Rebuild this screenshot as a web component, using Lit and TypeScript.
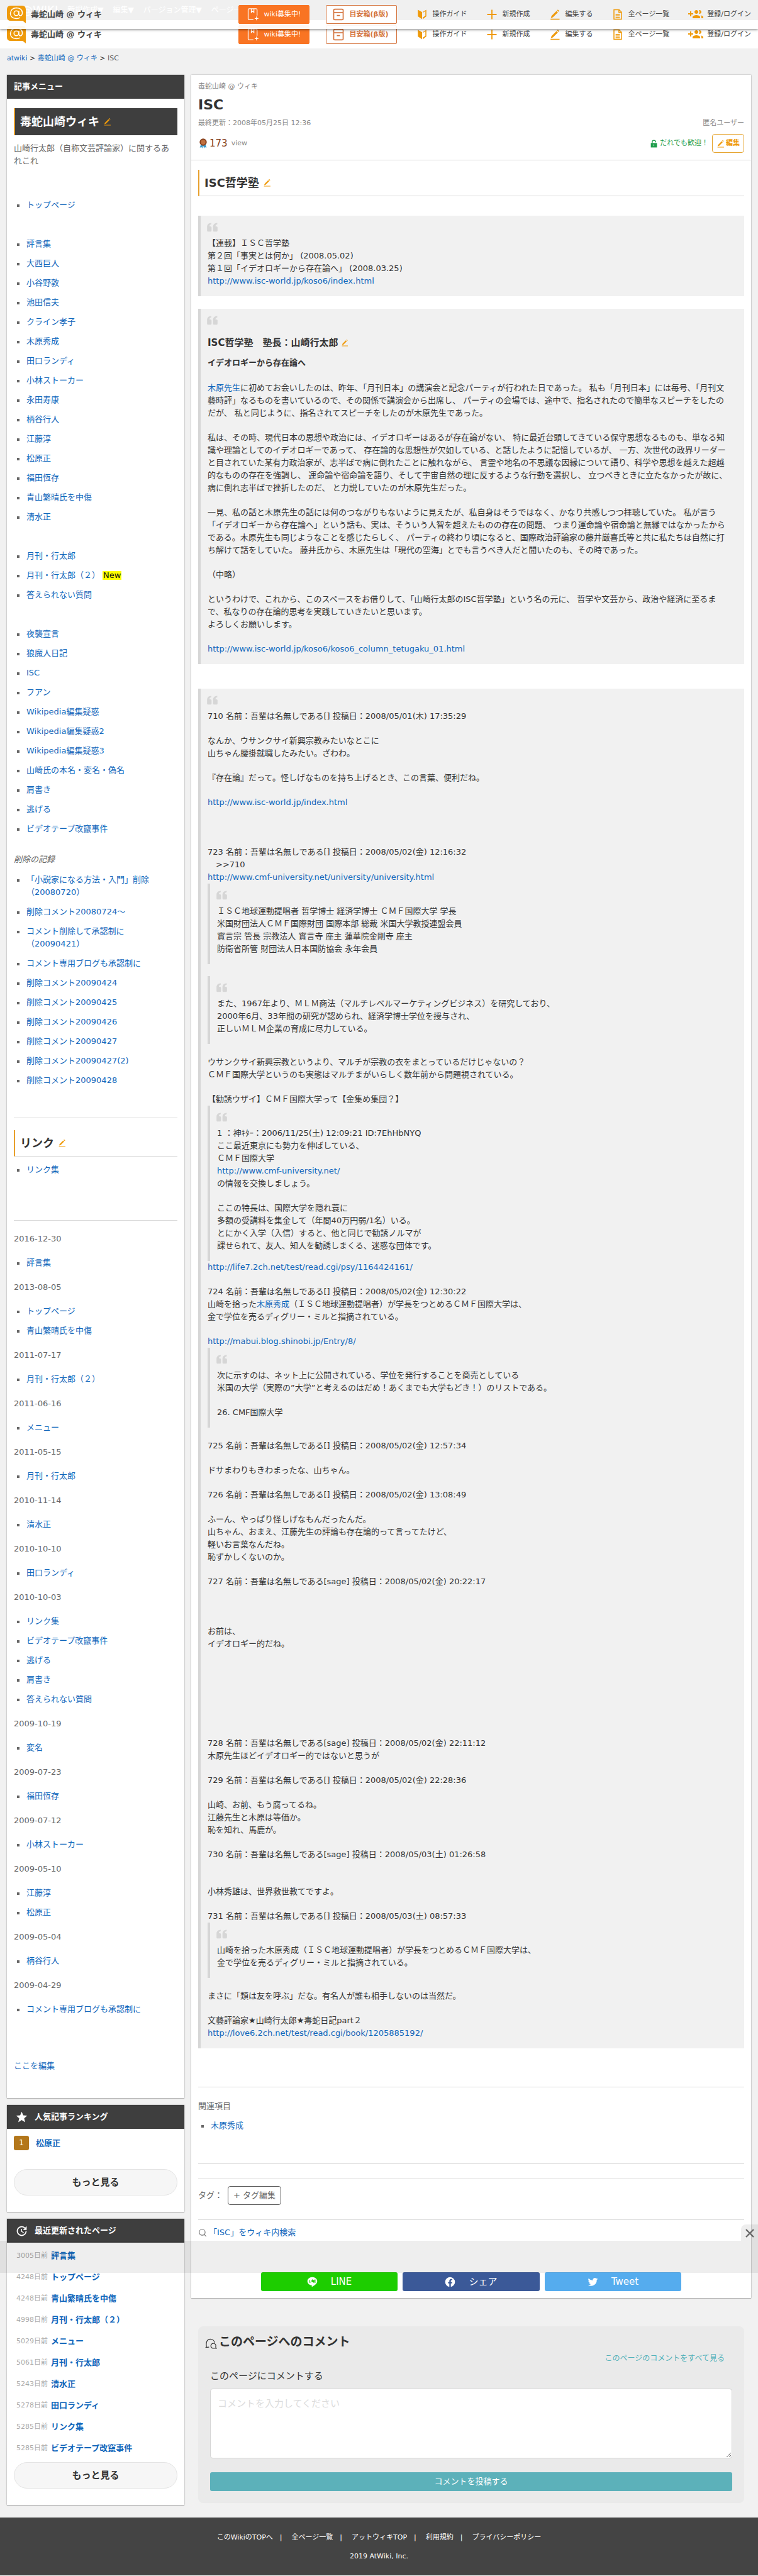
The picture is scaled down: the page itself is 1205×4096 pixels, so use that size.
import { LitElement, html, css, svg, nothing, type TemplateResult, type SVGTemplateResult } from "lit";
import { customElement, property } from "lit/decorators.js";

const PATHS: Record<string, SVGTemplateResult> = {
  pencil: svg`<path fill="currentColor" d="M15.500 4.500l3 3L8 18l-4.500 1.500L5 15zM16.800 3.200l1.700-1.700 3 3-1.700 1.700zM3 21h19v2H3z"/>`,
  beginner: svg`<path fill="currentColor" d="M3 2l9 5v15l-9-6zM21 2l-7.500 4.500v1.800l5.500-3.300v9.800l-5.500 3.600V22l7.500-6z"/>`,
  plus: svg`<path fill="currentColor" d="M10.800 2h2.400v8.800H22v2.400h-8.800V22h-2.400v-8.800H2v-2.400h8.800z"/>`,
  page: svg`<path fill="none" stroke="currentColor" stroke-width="2" d="M4 2h11l5 5v15H4zM14.500 2v5.500H20M7.500 11.500h9M7.500 15h9M7.500 18.500h9"/>`,
  users: svg`<path fill="currentColor" d="M8 10H5V7H3v3H0v2h3v3h2v-3h3v-2zm10 1c1.660 0 3-1.340 3-3s-1.340-3-3-3c-.320 0-.630.050-.910.140.570.810.900 1.790.900 2.860s-.340 2.040-.900 2.860c.280.090.590.140.910.140zm-5 0c1.660 0 3-1.340 3-3s-1.340-3-3-3-3 1.340-3 3 1.340 3 3 3zm6.620 2.160c.830.730 1.380 1.660 1.380 2.840v2h3v-2c0-1.540-2.370-2.490-4.380-2.840zM13 13c-2 0-6 1-6 3v2h12v-2c0-2-4-3-6-3z"/>`,
  book: svg`<path fill="none" stroke="currentColor" stroke-width="1.500" d="M13 22H5a2 2 0 0 1-2-2V3a2 2 0 0 1 2-2h13a2 2 0 0 1 2 2v11M9 1v7l2.500-2L14 8V1M19 16v7M15.500 19.500h7"/>`,
  box: svg`<path fill="none" stroke="currentColor" stroke-width="2" d="M5 2h14a2 2 0 0 1 2 2v16a2 2 0 0 1-2 2H5a2 2 0 0 1-2-2V4a2 2 0 0 1 2-2zM3 8.500h18M9 14h6"/>`,
  star: svg`<path fill="currentColor" d="M12 17.270L18.180 21l-1.640-7.030L22 9.240l-7.190-.610L12 2 9.190 8.630 2 9.240l5.460 4.730L5.820 21z"/>`,
  update: svg`<path fill="currentColor" d="M21 10.120h-6.780l2.740-2.820c-2.730-2.700-7.150-2.800-9.880-.100-2.730 2.710-2.730 7.080 0 9.790s7.150 2.710 9.880 0C18.320 15.650 19 14.080 19 12.100h2c0 1.980-.880 4.550-2.640 6.290-3.510 3.480-9.210 3.480-12.720 0-3.500-3.470-3.530-9.110-.020-12.580s9.140-3.470 12.650 0L21 3v7.120zM12.500 8v4.250l3.500 2.080-.720 1.210L11 13V8h1.500z"/>`,
  lock: svg`<path fill="none" stroke="currentColor" stroke-width="2.500" d="M7 11V7a5 5 0 0 1 10 0v1"/><path fill="currentColor" d="M3 10h18v13H3z"/><path stroke="#fff" stroke-width="2" d="M12 14v5"/>`,
  medal: svg`<path fill="#3a9bd0" d="M7 13l-3 9 4-1 2 3 2-7 2 7 2-3 4 1-3-9z"/><circle cx="12" cy="9" r="8.500" fill="#8a4420"/><circle cx="12" cy="9" r="5.500" fill="#c0703f"/>`,
  search: svg`<circle cx="11" cy="11" r="8" fill="none" stroke="currentColor" stroke-width="2"/><path stroke="currentColor" stroke-width="2" d="M16.500 17l5.500 5.500"/>`,
  quote: svg`<path fill="currentColor" d="M10 3v3c-2.500.4-3.600 1.600-3.700 4H8.500a2 2 0 0 1 2 2v6.500a2 2 0 0 1-2 2h-5a2 2 0 0 1-2-2V11C1.500 6 4.500 3.400 10 3zM22 3v3c-2.500.4-3.600 1.600-3.700 4h2.200a2 2 0 0 1 2 2v6.500a2 2 0 0 1-2 2h-5a2 2 0 0 1-2-2V11c0-5 3-7.600 8.500-8z"/>`,
  chat: svg`<path fill="none" stroke="currentColor" stroke-width="1.500" d="M8 19c-1.500 0-3 .5-6 .5 1.500-1.500 1-3 .5-4.500C1.500 8 5 3 10.500 3c4.500 0 8 3 8.500 7"/><path fill="none" stroke="currentColor" stroke-width="1.500" d="M22.500 21.500h-6a5 5 0 1 1 4.800-3.200c0 1.200.2 2.200 1.200 3.200z"/>`,
  line: svg`<path fill="currentColor" d="M12 1C5.500 1 1 5.200 1 10.300c0 4.500 3.800 8.300 9.200 9.100 1.300.3.500 2 .5 3.600C15 21 23 16.500 23 10.300 23 5.200 18.500 1 12 1z"/><path fill="none" stroke="#1dcd00" stroke-width="1.500" d="M5.500 7.500v5h2.500M9.800 7.500v5M12 12.500v-5l3 5v-5M19.500 7.500H17v5h2.500M17 10h2.500"/>`,
  facebook: svg`<path fill="currentColor" d="M23 12a11 11 0 1 0-12.700 10.900v-7.700H7.500V12h2.800V9.600c0-2.800 1.600-4.300 4.100-4.300 1.200 0 2.500.2 2.500.2v2.700h-1.400c-1.400 0-1.800.9-1.800 1.700V12h3.100l-.5 3.200h-2.600v7.700A11 11 0 0 0 23 12z"/>`,
  twitter: svg`<path fill="currentColor" d="M23 5.100a9 9 0 0 1-2.600.7 4.500 4.500 0 0 0 2-2.500 9 9 0 0 1-2.900 1.100 4.500 4.500 0 0 0-7.700 4.100A12.800 12.800 0 0 1 2.500 3.800a4.500 4.500 0 0 0 1.400 6 4.500 4.500 0 0 1-2-.6c0 2.200 1.500 4.100 3.600 4.500a4.500 4.500 0 0 1-2 .1 4.500 4.500 0 0 0 4.200 3.100A9 9 0 0 1 1 18.800a12.800 12.800 0 0 0 19.700-11.400A9 9 0 0 0 23 5.100z"/>`,
  close: svg`<path fill="none" stroke="currentColor" stroke-width="3.500" d="M3 3l18 18M21 3L3 21"/>`,
};

@customElement("wiki-icon")
class WikiIcon extends LitElement {
  @property() name = "";
  static styles = css`
    :host { display: inline-block; flex: none; width: 16px; height: 16px; }
    svg { display: block; width: 100%; height: 100%; }
  `;
  render() {
    return html`<svg viewBox="0 0 24 24" aria-hidden="true">${PATHS[this.name]}</svg>`;
  }
}

const MENU_GROUPS: string[][] = [
  ["トップページ"],
  ["評言集", "大西巨人", "小谷野敦", "池田信夫", "クライン孝子", "木原秀成", "田口ランディ", "小林ストーカー",
    "永田寿康", "柄谷行人", "江藤淳", "松原正", "福田恆存", "青山繁晴氏を中傷", "清水正"],
  ["月刊・行太郎", "月刊・行太郎（２）", "答えられない質問"],
  ["夜襲宣言", "狼魔人日記", "ISC", "フアン", "Wikipedia編集疑惑", "Wikipedia編集疑惑2", "Wikipedia編集疑惑3",
    "山崎氏の本名・変名・偽名", "肩書き", "逃げる", "ビデオテープ改竄事件"],
];
const FRESH = "月刊・行太郎（２）";

const DELETED = [
  "「小説家になる方法・入門」削除（20080720）", "削除コメント20080724～", "コメント削除して承認制に（20090421）",
  "コメント専用ブログも承認制に", "削除コメント20090424", "削除コメント20090425", "削除コメント20090426",
  "削除コメント20090427", "削除コメント20090427(2)", "削除コメント20090428",
];

const HISTORY: [string, string[]][] = [
  ["2016-12-30", ["評言集"]],
  ["2013-08-05", ["トップページ", "青山繁晴氏を中傷"]],
  ["2011-07-17", ["月刊・行太郎（２）"]],
  ["2011-06-16", ["メニュー"]],
  ["2011-05-15", ["月刊・行太郎"]],
  ["2010-11-14", ["清水正"]],
  ["2010-10-10", ["田口ランディ"]],
  ["2010-10-03", ["リンク集", "ビデオテープ改竄事件", "逃げる", "肩書き", "答えられない質問"]],
  ["2009-10-19", ["変名"]],
  ["2009-07-23", ["福田恆存"]],
  ["2009-07-12", ["小林ストーカー"]],
  ["2009-05-10", ["江藤淳", "松原正"]],
  ["2009-05-04", ["柄谷行人"]],
  ["2009-04-29", ["コメント専用ブログも承認制に"]],
];

const RECENT: [number, string][] = [
  [3005, "評言集"], [4248, "トップページ"], [4248, "青山繁晴氏を中傷"], [4998, "月刊・行太郎（２）"], [5029, "メニュー"],
  [5061, "月刊・行太郎"], [5243, "清水正"], [5278, "田口ランディ"], [5285, "リンク集"], [5285, "ビデオテープ改竄事件"],
];

const RIBBON = ["新規作成▼", "編集▼", "バージョン管理▼", "ページ一覧▼"];
const FOOTER = ["このWikiのTOPへ", "全ページ一覧", "アットウィキTOP", "利用規約", "プライバシーポリシー"];

const link = (text: string, cls = "") => html`<a class=${cls || nothing} href="#">${text}</a>`;
const lines = (...rows: (string | TemplateResult)[]) => rows.map((r, i) => (i ? html`<br>${r}` : r));
const para = (cls: string, ...rows: (string | TemplateResult)[]) => html`<p class=${cls || nothing}>${lines(...rows)}</p>`;
const head = (no: number, when: string, mail = "") => `${no} 名前：吾輩は名無しである[${mail}] 投稿日：${when}`;
const quote = (cls: string, body: TemplateResult) =>
  html`<blockquote class=${cls || nothing}><wiki-icon class="mark" name="quote"></wiki-icon>${body}</blockquote>`;
const items = (names: string[]) => html`<ul>${names.map(
  (n) => html`<li>${link(n)}</li>`)}</ul>`;

@customElement("app-root")
class AppRoot extends LitElement {
  static styles = css`
    :host {
      display: block; position: relative; background: #f1f1f1; color: #333;
      font: 13px/20px "DejaVu Sans", "Noto Sans CJK JP", sans-serif;
    }
    * { box-sizing: border-box; }
    a { color: #0f66bb; text-decoration: none; }
    p, h1, h2, h3, h4, ul, dl, dd, blockquote { margin: 0; padding: 0; }
    button, textarea { font: inherit; color: inherit; }
    hr { height: 1px; margin: 0; border: 0; background: #d8d8d8; }

    .ribbon { display: flex; align-items: center; gap: 15px; height: 32px; padding-left: 34px; background: #333; color: #fff; font-size: 12px; }
    .ribbon b { font-size: 18px; font-weight: normal; }
    .bar { display: flex; align-items: center; height: 45px; padding: 0 11px; background: #fff; font-size: 11px; }
    .bar a { color: #444; }
    .floating { position: absolute; z-index: 3; top: 0; left: 0; right: 0; height: 46px; background: rgba(255, 255, 255, .93); box-shadow: 0 1px 4px rgba(0, 0, 0, .5); }
    .brand { display: flex; align-items: center; gap: 8px; margin-right: auto; font-size: 13px; font-weight: bold; }
    .logo { flex: none; width: 30px; height: 28px; }
    .promo { display: flex; align-items: center; gap: 8px; width: 113px; height: 30px; margin-right: 26px; padding: 0 12px; border: 1px solid #f97423; border-radius: 2px; background: #f97423; }
    .bar .promo { color: #fff; }
    .promo wiki-icon { width: 20px; height: 22px; }
    .bar .promo.line { border-color: #d4733c; background: #fff; color: #d4733c; font-weight: bold; padding: 0 9px; }
    .tools { display: flex; gap: 30px; margin-left: 5px; }
    .tool { display: flex; align-items: center; gap: 8px; white-space: nowrap; }
    .tool wiki-icon { width: 18px; height: 18px; color: #ef9a0a; }
    .tool.wide { gap: 6px; }
    .tool.wide wiki-icon { width: 24px; height: 24px; }

    .crumbs { padding: 6px 11px 16px; font-size: 11px; }
    .crumbs span { color: #666; }
    .columns { display: grid; grid-template-columns: 282px minmax(0, 1fr); gap: 11px; padding: 0 11px 20px; align-items: start; }
    .side { display: grid; gap: 11px; }
    .card { background: #fff; box-shadow: 0 0 2px rgba(0, 0, 0, .35), 0 1px 1px rgba(0, 0, 0, .15); }

    .cap { display: flex; align-items: center; gap: 10px; height: 38px; padding: 0 11px; background: #3e3e3e; color: #fff; font-size: 13px; }
    .cap.icon { padding-left: 13px; }
    .cap wiki-icon { width: 21px; height: 21px; }
    .inner { padding: 0 11px; color: #666; }
    .title { display: flex; align-items: center; gap: 6px; height: 42px; padding-left: 8px; border-left: 2px solid #e8a02c; border-bottom: 1px solid #d8d8d8; color: #333; font-size: 18px; }
    .title.dark { height: 43px; margin-top: 15px; border-bottom: 0; background: #3e3e3e; color: #fff; }
    .pen { width: 13px; height: 13px; color: #ef9a0a; }
    .intro { margin: 11px 0 45px; padding-right: 6px; }
    ul { list-style: none; }
    li { display: flex; gap: 11px; padding: 5px 0 6px 5px; color: #666; }
    li::before { content: ""; flex: none; width: 4px; height: 4px; margin-top: 9px; background: #666; }
    .menu ul { margin-bottom: 31px; }
    .new { margin-left: -7px; padding: 0 1px; background: #ff0; color: #111; line-height: 14px; align-self: center; }
    .record { display: block; margin: -8px 0 7px; }
    .below { margin-top: 43px; margin-bottom: 19px; }
    .links { margin-top: 6px; }
    .history { margin-top: 64px; padding-top: 19px; border-top: 1px solid #d8d8d8; }
    .history dt + dd { margin: 13px 0; }
    .edit { display: block; margin: 64px 0 0; padding-bottom: 41px; }
    .history dd:last-child { margin-bottom: 0; }

    .rank { display: flex; align-items: center; gap: 11px; padding-top: 11px; margin-bottom: 30px; font-weight: bold; }
    .badge { width: 24px; height: 23px; border-radius: 3px; background: #b3771b; color: #fff; font-size: 12px; line-height: 23px; text-align: center; font-weight: normal; }
    .more { display: block; width: 100%; height: 42px; border: 1px solid #e4e4e4; border-radius: 21px; background: #f6f6f6; color: #333; font-size: 15px; font-weight: bold; }
    .pad { padding-bottom: 26px; }
    .recent { padding: 4px 0 5px; }
    .recent p { display: flex; align-items: center; gap: 5px; height: 34px; padding-left: 4px; font-weight: bold; }
    .recent span { color: #aaa; font-size: 11px; font-weight: normal; }

    .page { padding: 10px 11px 11px; }
    .meta { display: flex; justify-content: space-between; color: #888; font-size: 11px; line-height: 18px; }
    h1 { margin: 6px 0; font-size: 22px; line-height: 28px; color: #333; }
    .stats { display: flex; align-items: center; height: 30px; margin: 8px 0 11px; color: #888; font-size: 11px; }
    .stats b { margin: 0 6px 0 2px; color: #85401c; font-size: 15px; font-weight: normal; }
    .open { display: flex; align-items: center; gap: 3px; margin: 0 6px 0 auto; color: #1f9d4c; }
    .open wiki-icon { width: 13px; height: 15px; }
    .editbtn { display: flex; align-items: center; gap: 2px; height: 30px; padding: 0 6px; border: 1px solid #e6a531; border-radius: 4px; background: #fff; color: #ef9a0a; font-size: 11px; font-weight: bold; }
    .rule { margin: 0 -11px 15px; }

    blockquote { position: relative; padding: 34px 25px 14px 11px; border-left: 4px solid #d6d6d6; background: #f1f1f1; }
    .mark { position: absolute; left: 8px; top: 9px; width: 21px; height: 19px; color: #d6d6d6; }
    blockquote > * + * { margin-top: 19px; }
    blockquote > .mark + * { margin-top: 0; }
    blockquote > .tight { margin-top: 0; }
    blockquote > .gap2 { margin-top: 39px; }
    blockquote > .gap3 { margin-top: 59px; }
    blockquote > .gap7 { margin-top: 138px; }
    blockquote > h3.sub { display: flex; align-items: center; gap: 5px; margin-top: 8px; font-size: 15px; line-height: 24px; }
    .sub .pen { width: 12px; height: 12px; }
    blockquote > h4 { margin-top: 10px; font-size: 13px; }
    blockquote > h4 + p { margin-top: 20px; }
    .q1 { margin-top: 31px; }
    .q2 { margin-top: 20px; }
    .q3 { margin: 39px 0 61px; }

    .related { margin-top: 20px; color: #666; }
    .related ul { margin: 6px 0 44px; }
    .tags { display: flex; align-items: center; gap: 8px; margin: 23px 0; padding-top: 11px; border-top: 1px solid #d8d8d8; color: #666; }
    .tagbtn { height: 30px; padding: 0 8px; border: 1px solid #555; border-radius: 4px; background: #fff; }
    .find { display: flex; align-items: center; gap: 3px; margin: 10px 0 53px; color: #777; }
    .find wiki-icon { width: 14px; height: 14px; }
    .share { display: grid; grid-template-columns: repeat(3, 1fr); gap: 8px; width: 77%; margin: 0 auto; }
    .share a { display: flex; align-items: center; justify-content: center; gap: 21px; height: 30px; border-radius: 3px; color: #fff; font-size: 15px; }
    .share wiki-icon { width: 17px; height: 17px; }
    .s-line { background: #1dcd00; }
    .s-fb { background: #3b5998; }
    .s-tw { background: #55acee; }

    .comments { margin: 45px 11px 0; padding: 10px 19px 19px; border-radius: 8px; background: #eaeaea; }
    .comments h2 { display: flex; align-items: center; gap: 3px; margin-left: -8px; font-size: 19px; line-height: 28px; }
    .comments h2 wiki-icon { width: 19px; height: 19px; margin-top: 6px; }
    .all { display: block; margin: 3px 12px 8px; text-align: right; color: #52b1b9; font-size: 12px; }
    .comments label { display: block; margin-bottom: 10px; font-size: 15px; }
    textarea { display: block; width: 100%; height: 111px; padding: 13px 11px; border: 1px solid #d4d4d4; border-radius: 4px; background: #fff; font-size: 15px; }
    textarea::placeholder { color: #dcdcdc; }
    .post { display: block; width: 100%; height: 30px; margin-top: 22px; border: 0; border-radius: 3px; background: #5cb1ba; color: #fff; }

    footer { padding: 21px 0 20px; background: #444; color: #fff; font-size: 11px; text-align: center; }
    footer nav { display: flex; justify-content: center; margin-bottom: 10px; line-height: 21px; }
    footer a { color: #fff; }
    footer nav span { margin: 0 15px 0 11px; }

    .banner { position: absolute; z-index: 2; top: 3563px; left: 0; right: 0; height: 51px; background: rgba(0, 0, 0, .065); }
    .close { position: absolute; right: 0; bottom: 100%; width: 27px; height: 26px; padding: 6px; border: 0; border-radius: 8px 0 0 0; background: rgba(0, 0, 0, .065); color: #666; }
    .close wiki-icon { display: block; width: 16px; height: 16px; }
  `;

  private bar(cls = "") {
    return html`<header class="bar ${cls}">
      <a class="brand" href="#">
        <svg class="logo" viewBox="0 0 30 28" aria-hidden="true">
          <path fill="#ef9a0a" d="M6 0h18q6 0 6 6v22l-5-4H6q-6 0-6-6V6q0-6 6-6z"/>
          <g fill="none" stroke="#fff" stroke-width="1.500"><circle cx="15" cy="12" r="3.800"/><path d="M19 8v5q0 3 2.500 3 3-.500 3-5-.500-7-9.500-7.500Q6 4 5.500 12.500 6 20 15 20.500q4 0 6-1.500"/></g>
        </svg>毒蛇山崎 @ ウィキ</a>
      <a class="promo" href="#"><wiki-icon name="book"></wiki-icon>wiki募集中!</a>
      <a class="promo line" href="#"><wiki-icon name="box"></wiki-icon>目安箱(β版)</a>
      <nav class="tools">
        <a class="tool" href="#"><wiki-icon name="beginner"></wiki-icon>操作ガイド</a>
        <a class="tool" href="#"><wiki-icon name="plus"></wiki-icon>新規作成</a>
        <a class="tool" href="#"><wiki-icon name="pencil"></wiki-icon>編集する</a>
        <a class="tool" href="#"><wiki-icon name="page"></wiki-icon>全ページ一覧</a>
        <a class="tool wide" href="#"><wiki-icon name="users"></wiki-icon>登録/ログイン</a>
      </nav>
    </header>`;
  }

  private side() {
    const pen = html`<wiki-icon class="pen" name="pencil"></wiki-icon>`;
    return html`<aside class="side">
      <section class="card">
        <h2 class="cap">記事メニュー</h2>
        <div class="inner">
          <h2 class="title dark">毒蛇山崎ウィキ${pen}</h2>
          <p class="intro">山崎行太郎（自称文芸評論家）に関するあれこれ</p>
          <div class="menu">${MENU_GROUPS.map((g) => html`<ul>${g.map(
            (n) => html`<li>${link(n)}${n === FRESH ? html`<span class="new">New</span>` : nothing}</li>`)}</ul>`)}</div>
          <em class="record">削除の記録</em>
          ${items(DELETED)}
          <hr class="below">
          <h2 class="title">リンク${pen}</h2>
          <div class="links">${items(["リンク集"])}</div>
          <dl class="history">${HISTORY.map(([day, names]) => html`<dt>${day}</dt><dd>${items(names)}</dd>`)}</dl>
          <a class="edit" href="#">ここを編集</a>
        </div>
      </section>
      <section class="card">
        <h2 class="cap icon"><wiki-icon name="star"></wiki-icon>人気記事ランキング</h2>
        <div class="inner pad">
          <div class="rank"><span class="badge">1</span>${link("松原正")}</div>
          <button class="more">もっと見る</button>
        </div>
      </section>
      <section class="card">
        <h2 class="cap icon"><wiki-icon name="update"></wiki-icon>最近更新されたページ</h2>
        <div class="inner pad">
          <div class="recent">${RECENT.map(([d, n]) => html`<p><span>${d}日前</span>${link(n)}</p>`)}</div>
          <button class="more">もっと見る</button>
        </div>
      </section>
    </aside>`;
  }

  private article() {
    return html`
      ${quote("q1", para("", "【連載】ＩＳＣ哲学塾", "第２回「事実とは何か」 (2008.05.02)", "第１回「イデオロギーから存在論へ」 (2008.03.25)",
        link("http://www.isc-world.jp/koso6/index.html")))}
      ${quote("q2", html`
        <h3 class="sub">ISC哲学塾　塾長：山崎行太郎<wiki-icon class="pen" name="pencil"></wiki-icon></h3>
        <h4>イデオロギーから存在論へ</h4>
        <p>${link("木原先生")}に初めてお会いしたのは、昨年、「月刊日本」の講演会と記念パーティが行われた日であった。 私も「月刊日本」には毎号、「月刊文藝時評」なるものを書いているので、その関係で講演会から出席し、 パーティの会場では、途中で、指名されたので簡単なスピーチをしたのだが、 私と同じように、指名されてスピーチをしたのが木原先生であった。</p>
        <p>私は、その時、現代日本の思想や政治には、イデオロギーはあるが存在論がない、 特に最近台頭してきている保守思想なるものも、単なる知識や理論としてのイデオロギーであって、 存在論的な思想性が欠如している、と話したように記憶しているが、 一方、次世代の政界リーダーと目されていた某有力政治家が、志半ばで病に倒れたことに触れながら、 言霊や地名の不思議な因縁について語り、科学や思想を越えた超越的なものの存在を強調し、 運命論や宿命論を語り、そして宇宙自然の理に反するような行動を選択し、 立つべきときに立たなかったが故に、病に倒れ志半ばで挫折したのだ、 と力説していたのが木原先生だった。</p>
        <p>一見、私の話と木原先生の話には何のつながりもないように見えたが、私自身はそうではなく、かなり共感しつつ拝聴していた。 私が言う「イデオロギーから存在論へ」という話も、実は、そういう人智を超えたものの存在の問題、 つまり運命論や宿命論と無縁ではなかったからである。木原先生も同じようなことを感じたらしく、 パーティの終わり頃になると、国際政治評論家の藤井厳喜氏等と共に私たちは自然に打ち解けて話をしていた。 藤井氏から、木原先生は「現代の空海」とでも言うべき人だと聞いたのも、その時であった。</p>
        <p>（中略）</p>
        <p>というわけで、これから、このスペースをお借りして、「山崎行太郎のISC哲学塾」という名の元に、 哲学や文芸から、政治や経済に至るまで、私なりの存在論的思考を実践していきたいと思います。<br>よろしくお願いします。</p>
        <p>${link("http://www.isc-world.jp/koso6/koso6_column_tetugaku_01.html")}</p>`)}
      ${quote("q3", html`
        ${para("", head(710, "2008/05/01(木) 17:35:29"))}
        ${para("", "なんか、ウサンクサイ新興宗教みたいなとこに", "山ちゃん腰掛就職したみたい。ざわわ。")}
        ${para("", "『存在論』だって。怪しげなものを持ち上げるとき、この言葉、便利だね。")}
        ${para("", link("http://www.isc-world.jp/index.html"))}
        ${para("gap3", head(723, "2008/05/02(金) 12:16:32"), "　>>710", link("http://www.cmf-university.net/university/university.html"))}
        ${quote("tight", para("", "ＩＳＣ地球運動提唱者 哲学博士 経済学博士 ＣＭＦ国際大学 学長", "米国財団法人ＣＭＦ国際財団 国際本部 総裁 米国大学教授連盟会員",
          "實言宗 管長 宗教法人 實言寺 座主 蓮華院金剛寺 座主", "防衛省所管 財団法人日本国防協会 永年会員"))}
        ${quote("", para("", "また、1967年より、ＭＬＭ商法（マルチレベルマーケティングビジネス）を研究しており、", "2000年6月、33年間の研究が認められ、経済学博士学位を授与され、",
          "正しいＭＬＭ企業の育成に尽力している。"))}
        ${para("", "ウサンクサイ新興宗教というより、マルチが宗教の衣をまとっているだけじゃないの？", "ＣＭＦ国際大学というのも実態はマルチまがいらしく数年前から問題視されている。")}
        ${para("", "【勧誘ウザイ】ＣＭＦ国際大学って【金集め集団？】")}
        ${quote("tight", html`
          ${para("", "1 ：神ｷﾀｰ：2006/11/25(土) 12:09:21 ID:7EhHbNYQ", "ここ最近東京にも勢力を伸ばしている、", "ＣＭＦ国際大学", link("http://www.cmf-university.net/"), "の情報を交換しましょう。")}
          ${para("", "ここの特長は、国際大学を隠れ蓑に", "多額の受講料を集金して（年間40万円弱/1名）いる。", "とにかく入学（入信）すると、他と同じで勧誘ノルマが", "課せられて、友人、知人を勧誘しまくる、迷惑な団体です。")}`)}
        ${para("tight", link("http://life7.2ch.net/test/read.cgi/psy/1164424161/"))}
        ${para("", head(724, "2008/05/02(金) 12:30:22"), html`山崎を拾った${link("木原秀成")}（ＩＳＣ地球運動提唱者）が学長をつとめるＣＭＦ国際大学は、`, "金で学位を売るディグリー・ミルと指摘されている。")}
        ${para("", link("http://mabui.blog.shinobi.jp/Entry/8/"))}
        ${quote("tight", html`
          ${para("", "次に示すのは、ネット上に公開されている、学位を発行することを商売としている", "米国の大学（実際の”大学”と考えるのはだめ！あくまでも大学もどき！）のリストである。")}
          ${para("", "26. CMF国際大学")}`)}
        ${para("", head(725, "2008/05/02(金) 12:57:34"))}
        ${para("", "ドサまわりもきわまったな、山ちゃん。")}
        ${para("", head(726, "2008/05/02(金) 13:08:49"))}
        ${para("", "ふーん、やっぱり怪しげなもんだったんだ。", "山ちゃん、おまえ、江藤先生の評論も存在論的って言ってたけど、", "軽いお言葉なんだね。", "恥ずかしくないのか。")}
        ${para("", head(727, "2008/05/02(金) 20:22:17", "sage"))}
        ${para("gap3", "お前は、", "イデオロギー的だね。")}
        ${para("gap7", head(728, "2008/05/02(金) 22:11:12", "sage"), "木原先生ほどイデオロギー的ではないと思うが")}
        ${para("", head(729, "2008/05/02(金) 22:28:36"))}
        ${para("", "山崎、お前、もう腐ってるね。", "江藤先生と木原は等価か。", "恥を知れ、馬鹿が。")}
        ${para("", head(730, "2008/05/03(土) 01:26:58", "sage"))}
        ${para("gap2", "小林秀雄は、世界救世教てですよ。")}
        ${para("", head(731, "2008/05/03(土) 08:57:33"))}
        ${quote("tight", para("", "山崎を拾った木原秀成（ＩＳＣ地球運動提唱者）が学長をつとめるＣＭＦ国際大学は、", "金で学位を売るディグリー・ミルと指摘されている。"))}
        ${para("", "まさに「類は友を呼ぶ」だな。有名人が誰も相手しないのは当然だ。")}
        ${para("", "文藝評論家★山崎行太郎★毒蛇日記part２", link("http://love6.2ch.net/test/read.cgi/book/1205885192/"))}`)}
    `;
  }

  render() {
    return html`
      <div class="ribbon"><b>@WIKI</b>${RIBBON.map((t) => html`<span>${t}</span>`)}</div>
      ${this.bar("floating")}
      ${this.bar()}
      <nav class="crumbs">${link("atwiki")} &gt; ${link("毒蛇山崎 @ ウィキ")} &gt; <span>ISC</span></nav>
      <div class="columns">
        ${this.side()}
        <main>
          <article class="card page">
            <div class="meta">毒蛇山崎 @ ウィキ</div>
            <h1>ISC</h1>
            <div class="meta"><span>最終更新：2008年05月25日 12:36</span><span>匿名ユーザー</span></div>
            <div class="stats">
              <wiki-icon name="medal"></wiki-icon><b>173</b>view
              <span class="open"><wiki-icon name="lock"></wiki-icon>だれでも歓迎！</span>
              <button class="editbtn"><wiki-icon class="pen" name="pencil"></wiki-icon>編集</button>
            </div>
            <hr class="rule">
            <h2 class="title">ISC哲学塾<wiki-icon class="pen" name="pencil"></wiki-icon></h2>
            ${this.article()}
            <hr>
            <div class="related">関連項目${items(["木原秀成"])}</div>
            <hr>
            <div class="tags">タグ：<button class="tagbtn">+ タグ編集</button></div>
            <hr>
            <div class="find"><wiki-icon name="search"></wiki-icon>${link("「ISC」をウィキ内検索")}</div>
            <div class="share">
              <a class="s-line" href="#"><wiki-icon name="line"></wiki-icon>LINE</a>
              <a class="s-fb" href="#"><wiki-icon name="facebook"></wiki-icon>シェア</a>
              <a class="s-tw" href="#"><wiki-icon name="twitter"></wiki-icon>Tweet</a>
            </div>
          </article>
          <section class="comments">
            <h2><wiki-icon name="chat"></wiki-icon>このページへのコメント</h2>
            <a class="all" href="#">このページのコメントをすべて見る</a>
            <label for="comment">このページにコメントする</label>
            <textarea id="comment" placeholder="コメントを入力してください"></textarea>
            <button class="post">コメントを投稿する</button>
          </section>
        </main>
      </div>
      <div class="banner"><button class="close" aria-label="閉じる"><wiki-icon name="close"></wiki-icon></button></div>
      <footer>
        <nav>${FOOTER.map((t, i) => html`${i ? html`<span>|</span>` : nothing}${link(t)}`)}</nav>
        2019 AtWiki, Inc.
      </footer>
    `;
  }
}
